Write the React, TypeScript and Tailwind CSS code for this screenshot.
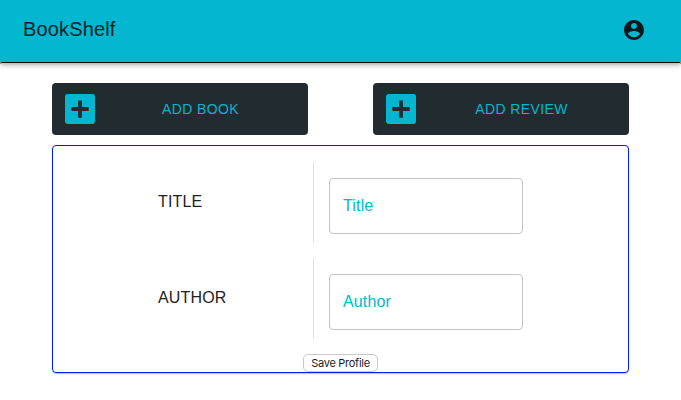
import React from "react";

function AddIcon() {
  return (
    <svg viewBox="0 0 30 30" className="h-[30px] w-[30px] shrink-0">
      <rect width="30" height="30" rx="3" fill="#04b6cf" />
      <path d="M13.1 6.5h3.8v6.6h6.8v3.8h-6.8v6.8h-3.8v-6.8H6.4v-3.8h6.7z" fill="#222c30" />
    </svg>
  );
}

function AddButton({ label }: { label: string }) {
  return (
    <button className="flex h-[52px] w-64 items-center rounded bg-[#222c30] pl-[13px] text-[#04b6cf]">
      <AddIcon />
      <span className="flex-1 pl-2 pr-[10px] text-center text-sm tracking-[0.4px]">{label}</span>
    </button>
  );
}

function FieldRow({ label, placeholder }: { label: string; placeholder: string }) {
  return (
    <div className="flex h-20">
      <div className="w-[261px] border-r border-[#e0e0e0] pl-[105px] pt-7 text-base leading-6 tracking-[0.15px] text-[#212121]">
        {label}
      </div>
      <div className="ml-[15px] mt-4 flex h-14 w-[194px] items-center rounded border border-[#c4c4c4] pl-[13px] text-base leading-none tracking-[0.15px] text-[#04b6cf]">
        {placeholder}
      </div>
    </div>
  );
}

export default function App() {
  return (
    <div className="h-[400px] w-[681px] overflow-hidden bg-white font-['Liberation_Sans',sans-serif]">
      <header className="flex h-[62px] items-start justify-between bg-[#04b6cf] pl-[23px] pr-[35px] shadow-[0_3px_4px_-1px_rgba(0,0,0,0.2),0_4px_5px_0_rgba(0,0,0,0.12),0_1px_10px_0_rgba(0,0,0,0.1)]">
        <h1 className="pt-[13px] text-xl leading-8 tracking-[0.15px] text-[#06242a]">BookShelf</h1>
        <svg viewBox="0 0 24 24" className="mt-[18px] h-6 w-6 fill-[#05191d]">
          <path d="M12 2C6.48 2 2 6.48 2 12s4.48 10 10 10 10-4.48 10-10S17.52 2 12 2zm0 3c1.66 0 3 1.34 3 3s-1.34 3-3 3-3-1.34-3-3 1.34-3 3-3zm0 14.2c-2.5 0-4.71-1.28-6-3.22.03-1.99 4-3.08 6-3.08 1.99 0 5.97 1.09 6 3.08-1.29 1.94-3.5 3.22-6 3.22z" />
        </svg>
      </header>
      <div className="relative h-[3px] rounded-t-[2px] border-t border-black" />
      <main className="mx-[52px] mt-[18px]">
        <div className="flex justify-between">
          <AddButton label="ADD BOOK" />
          <AddButton label="ADD REVIEW" />
        </div>
        <section className="mt-2.5 flex h-[228px] flex-col rounded border border-[#0019ff] pt-4 shadow-[0_1px_1px_rgba(0,0,0,0.25)]">
          <div className="flex flex-col gap-4">
            <FieldRow label="TITLE" placeholder="Title" />
            <FieldRow label="AUTHOR" placeholder="Author" />
          </div>
          <button className="ml-[250px] mt-4 flex h-[18px] w-[75px] shrink-0 items-center justify-center whitespace-nowrap rounded-[5px] border border-[#c8c8c8] font-['Inter',sans-serif] text-[11px] leading-none tracking-[-0.28px] text-[#1c1c1c]">
            Save Profile
          </button>
        </section>
      </main>
    </div>
  );
}
